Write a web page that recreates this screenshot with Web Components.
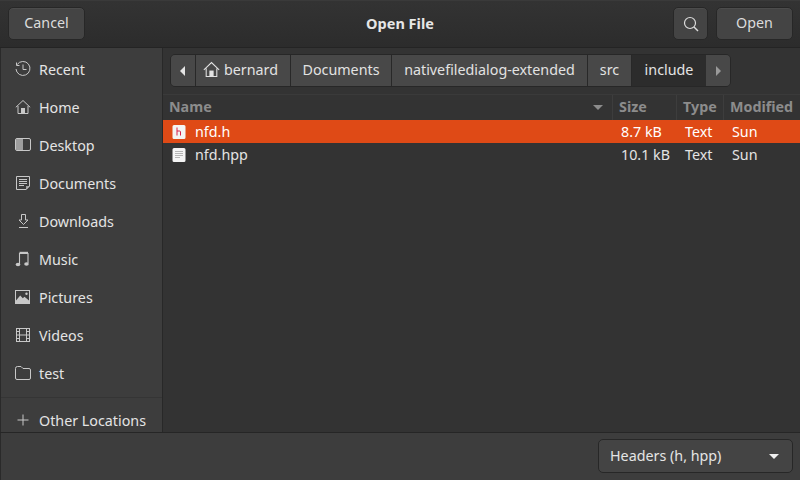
<!DOCTYPE html>
<html><head><meta charset="utf-8">
<style>
html,body{margin:0;padding:0;background:#2b2b2b;}
body{width:800px;height:480px;overflow:hidden;font:14.3px "Noto Sans",sans-serif;color:#eeeeec;}
</style></head><body>
<file-dialog></file-dialog>
<script>
const ICONS={
recent:'<path d="M2.200 3.500A7 7 0 1 1 1 8" fill="none" stroke="currentColor"/><path d="M1.500 1.500v3h3" fill="none" stroke="currentColor"/><path d="M8 3.500V8.500H11.500" fill="none" stroke="currentColor"/>',
home:'<path d="M.8 8.300 8 1.500l7.200 6.800M3 7v7.500h10V7" fill="none" stroke="currentColor"/><rect x="6" y="9" width="4" height="5.500" fill="currentColor"/>',
desktop:'<rect x=".5" y="1.500" width="15" height="12" rx="1.500" fill="none" stroke="currentColor"/><path d="M1 3a1 1 0 0 1 1-1h6v11H2a1 1 0 0 1-1-1z" fill="currentColor" opacity=".7"/>',
docs:'<path d="M1.500 1.500h13v9.500l-3.500 3.500H1.500z" fill="none" stroke="currentColor"/><path d="M4 4.500h8M4 6.500h8M4 8.500h8M4 10.500h5" stroke="currentColor"/><path d="M11 15v-4h4z" fill="currentColor" opacity=".7"/>',
down:'<path d="M6.500 1.500h4v5.500h2.500L8.500 11.500 4 7h2.500z" fill="none" stroke="currentColor"/><path d="M4 14.500h9" stroke="currentColor"/>',
music:'<path d="M4.500 13V2.500h8.500V12" fill="none" stroke="currentColor" stroke-width="1.100"/><path d="M4.500 1.500H13" stroke="currentColor" stroke-width="1.400"/><ellipse cx="3" cy="13.500" rx="2.300" ry="1.800" fill="currentColor"/><ellipse cx="11.500" cy="13" rx="2.300" ry="1.800" fill="currentColor"/>',
pics:'<rect x=".5" y="1.500" width="14" height="13" fill="none" stroke="currentColor"/><path d="M1 11.500 5.200 6.500l2.600 2.700 1.700-1.400 4.500 3.700v3H1z" fill="currentColor"/><circle cx="11.500" cy="4.800" r="1.200" fill="currentColor"/>',
video:'<rect x="1.500" y="1.500" width="13" height="13" fill="none" stroke="currentColor"/><path d="M4.500 2v12M11.500 2v12M4.500 8h7M2 4.500h2.500M2 8h2.500M2 11.500h2.500M11.500 4.500H14M11.500 8H14M11.500 11.500H14" fill="none" stroke="currentColor"/>',
folder:'<path d="M.5 3.500a2 2 0 0 1 2-2h3.500l2 2h6a1.500 1.500 0 0 1 1.500 1.500v8a1.500 1.500 0 0 1-1.500 1.500h-12a1.500 1.500 0 0 1-1.500-1.500z" fill="none" stroke="currentColor"/>',
plus:'<path d="M8 2.500v11M2.500 8h11" stroke="currentColor"/>'
};
function svg(name,size=16){return `<svg width="${size}" height="${size}" viewBox="0 0 16 16">${ICONS[name]}</svg>`;}
function def(tag,css,html){
  customElements.define(tag,class extends HTMLElement{
    constructor(){super();const r=this.attachShadow({mode:'open'});r.innerHTML=`<style>${css}</style>`+(typeof html==='function'?html(this):html);}
  });
}
def('hdr-button',`:host{display:flex;align-items:center;justify-content:center;box-sizing:border-box;height:33px;padding-bottom:2px;margin-top:6px;background:#444444;border:1px solid #272727;border-radius:5px;color:#dcdcdc;box-shadow:inset 0 1px 0 #4c4c4c;}`,`<slot></slot>`);
def('header-bar',`:host{display:grid;grid-template-columns:1fr auto 1fr;box-sizing:border-box;height:48px;padding:0 7px 0 8px;background:linear-gradient(#333333,#2c2c2c);border-bottom:1px solid #242424;border-top:1px solid #3a3a3a;align-items:start;}
.t{text-align:center;font-weight:700;font-size:14.5px;color:#e6e6e6;line-height:47px;margin:-1px 1px 0 0;}
.l{display:flex;}.r{display:flex;gap:8px;justify-content:flex-end;}`,
`<div class="l"><slot name="left"></slot></div><div class="t">Open File</div><div class="r"><slot name="right"></slot></div>`);
def('side-row',`:host{display:flex;align-items:center;height:38px;flex:none;padding-left:14px;gap:8px;color:#e4e4e4;}
svg{color:#c8c8c8;flex:none;}`,
h=>`${svg(h.getAttribute('icon'))}<slot></slot>`);
def('side-bar',`:host{display:flex;flex-direction:column;box-sizing:border-box;width:163px;flex:none;background:#3d3d3d;border-right:1px solid #282828;border-left:1px solid #2a2a2a;padding-top:2px;overflow:hidden;}
.sep{height:1px;background:#353535;margin:5px 0 3px;flex:none;}`,
`<slot name="top"></slot><div class="sep"></div><slot name="bottom"></slot>`);
def('path-seg',`:host{display:flex;align-items:center;justify-content:center;box-sizing:border-box;height:100%;padding-bottom:2px;background:#484848;border-right:1px solid #282828;color:#e2e2e2;gap:4px;flex:none;}
:host([active]){background:#2c2c2c;color:#e4e4e4;border-right:0;}`,`<slot></slot>`);
def('path-bar',`:host{display:flex;box-sizing:border-box;height:33px;width:561px;border:1px solid #272727;border-radius:5px;overflow:hidden;background:#333;}`,`<slot></slot>`);
def('col-head',`:host{display:grid;grid-template-columns:450px 64px 47px 1fr;box-sizing:border-box;height:26px;border-top:1px solid #3a3a3a;background:#333333;color:#8c8c8c;font-weight:700;line-height:23px;}
div{box-sizing:border-box;padding-left:6px;border-right:1px solid #3d3d3d;position:relative;white-space:nowrap;overflow:hidden;}
div:first-child{padding-left:7px;}
div:last-child{border:0;}
i{position:absolute;left:430px;top:10px;border:5px solid transparent;border-top:5px solid #8c8c8c;border-bottom:0;}`,
`<div>Name<i></i></div><div>Size</div><div>Type</div><div>Modified</div>`);
def('file-row',`:host{display:grid;grid-template-columns:450px 64px 47px 1fr;height:23px;line-height:23px;color:#e4e4e4;}
:host([selected]){background:#df4a16;color:#fff;}
.n{display:flex;align-items:center;padding-left:8px;gap:8px;}
.s,.y,.m{padding-left:8px;}
svg{flex:none;}`,
h=>{const sel=h.hasAttribute('selected');
 const g=sel?'<path d="M6 3.500v8M6 7h2.500a1 1 0 0 1 1 1v3.500" fill="none" stroke="#d6204a" stroke-width="1"/>':'<path d="M4 4.500h8M4 6.500h8M4 8.500h8M4 10.500h5" stroke="#b4b4b4"/>';
 return `<div class="n"><svg width="16" height="16" viewBox="0 0 16 16"><path d="M3 1h10a1.500 1.500 0 0 1 1.500 1.500v11A1.500 1.500 0 0 1 13 15H3a1.500 1.500 0 0 1-1.500-1.500v-11A1.500 1.500 0 0 1 3 1z" fill="#f4f4f4"/>${g}</svg><span>${h.getAttribute('name')}</span></div><div class="s">${h.getAttribute('size')}</div><div class="y">Text</div><div class="m">Sun</div>`;});
def('filter-combo',`:host{display:flex;align-items:center;justify-content:space-between;box-sizing:border-box;width:195px;height:34px;padding:0 13px 2px 11px;background:#444444;border:1px solid #272727;border-radius:5px;color:#e4e4e4;}
i{border:5px solid transparent;border-top:5px solid #f0f0f0;border-bottom:0;margin-top:2px;}`,`<slot></slot><i></i>`);
def('file-dialog',`:host{display:flex;flex-direction:column;width:800px;height:480px;overflow:hidden;background:#333;}
.main{display:flex;height:385px;border-bottom:1px solid #262626;box-sizing:border-box;flex:none;}
.c{flex:1;background:#333333;display:flex;flex-direction:column;padding-top:6px;min-width:0;}
.pw{padding:0 0 7px 7px;flex:none;}
.foot{flex:1;background:#3d3d3d;display:flex;justify-content:flex-end;padding:6px 7px 0 0;box-sizing:border-box;border-left:1px solid #2a2a2a;}
.tri{border:5px solid transparent;border-left:0;border-right:5px solid #e4e4e4;}
.trr{border:5px solid transparent;border-right:0;border-left:5px solid #9a9a9a;}
`,
`<header-bar>
  <hdr-button slot="left" style="width:77px">Cancel</hdr-button>
  <hdr-button slot="right" style="width:35px;padding-bottom:0"><svg width="18" height="18" viewBox="0 0 18 18"><circle cx="8" cy="8" r="5.500" fill="none" stroke="#dcdcdc" stroke-width="1.200"/><path d="M12 12l4 4" stroke="#dcdcdc" stroke-width="1.400"/></svg></hdr-button>
  <hdr-button slot="right" style="width:77px">Open</hdr-button>
</header-bar>
<div class="main">
  <side-bar>
    <side-row slot="top" icon="recent">Recent</side-row>
    <side-row slot="top" icon="home">Home</side-row>
    <side-row slot="top" icon="desktop">Desktop</side-row>
    <side-row slot="top" icon="docs">Documents</side-row>
    <side-row slot="top" icon="down">Downloads</side-row>
    <side-row slot="top" icon="music">Music</side-row>
    <side-row slot="top" icon="pics">Pictures</side-row>
    <side-row slot="top" icon="video">Videos</side-row>
    <side-row slot="top" icon="folder">test</side-row>
    <side-row slot="bottom" icon="plus">Other Locations</side-row>
  </side-bar>
  <div class="c">
    <div class="pw"><path-bar>
      <path-seg style="width:25px;padding:0 2px 0 0"><i class="tri"></i></path-seg>
      <path-seg style="width:95px;justify-content:flex-start;padding-left:7px">${svg('home',17)}bernard</path-seg>
      <path-seg style="width:101px">Documents</path-seg>
      <path-seg style="width:196px">nativefiledialog-extended</path-seg>
      <path-seg style="width:44px">src</path-seg>
      <path-seg active style="width:74px">include</path-seg>
      <path-seg style="width:24px;border-right:0;padding-bottom:0"><i class="trr"></i></path-seg>
    </path-bar></div>
    <col-head></col-head>
    <file-row selected name="nfd.h" size="8.7 kB"></file-row>
    <file-row name="nfd.hpp" size="10.1 kB"></file-row>
  </div>
</div>
<div class="foot"><filter-combo>Headers (h, hpp)</filter-combo></div>`);
</script>
</body></html>
